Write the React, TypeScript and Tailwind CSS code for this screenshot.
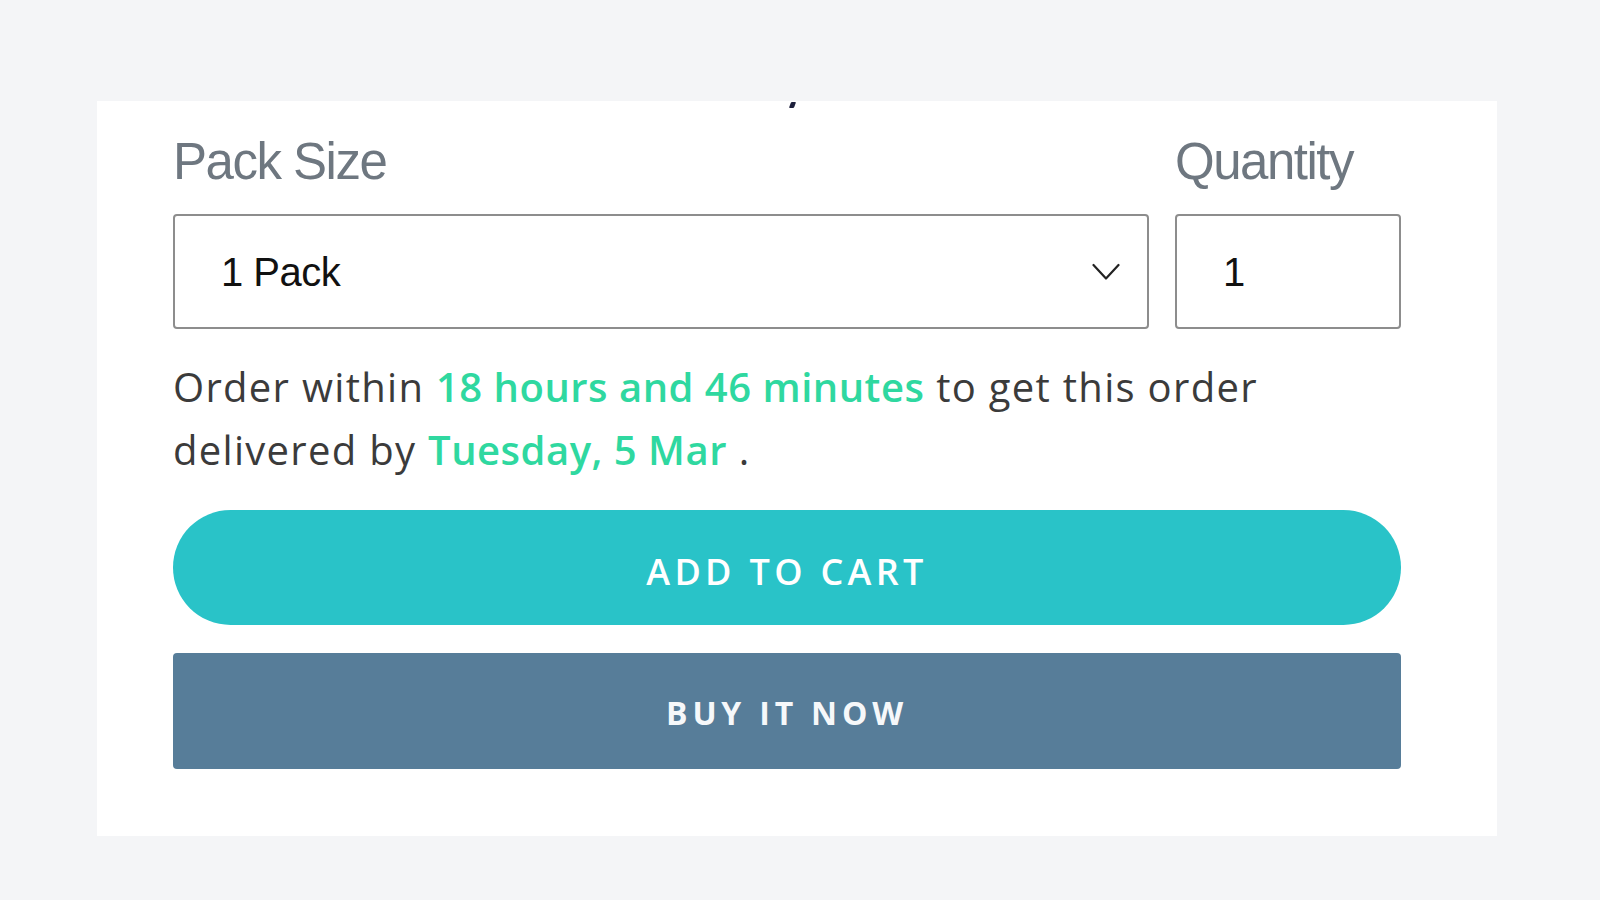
import React from "react";

export default function App() {
  return (
    <div className="w-[1600px] h-[900px] bg-[#f4f5f7] pt-[101px] pl-[97px] overflow-hidden">
      <div className="relative w-[1400px] h-[735px] bg-white pl-[76px] pr-[96px] pt-[35px]">
        <div className="absolute left-[693px] top-[1px] w-[5px] h-[6px] bg-[#1d1f3b] skew-x-[-20deg] rounded-[1px]" />
        <div className="flex gap-[26px]" style={{ fontFamily: '"Liberation Sans", Arial, sans-serif' }}>
          <div className="flex flex-col w-[976px]">
            <label className="text-[51px] leading-[51px] tracking-[-1.5px] text-[#6e7780]">Pack Size</label>
            <div className="mt-[27px] h-[115px] border-2 border-[#8d8d8d] rounded-[4px] flex items-center justify-between pl-[46px] pr-[27px]">
              <span className="text-[40px] tracking-[-0.5px] text-[#111]">1 Pack</span>
              <svg width="28" height="18" viewBox="0 0 28 18" fill="none">
                <polyline points="1.5,2 14,15.5 26.5,2" stroke="#222" strokeWidth="2.2" strokeLinecap="round" strokeLinejoin="round" />
              </svg>
            </div>
          </div>
          <div className="flex flex-col w-[226px]">
            <label className="text-[51px] leading-[51px] tracking-[-1.5px] text-[#6e7780]">Quantity</label>
            <div className="mt-[27px] h-[115px] border-2 border-[#8d8d8d] rounded-[4px] flex items-center pl-[46px]">
              <span className="text-[40px] text-[#111]">1</span>
            </div>
          </div>
        </div>
        <p
          className="mt-[26px] text-[40px] leading-[63px] tracking-[1.3px] text-[#3b3b3b]"
          style={{ fontFamily: '"Open Sans", "Noto Sans", sans-serif' }}
        >
          Order within <span className="font-semibold text-[#2fd8a0] tracking-[0.5px]">18 hours and 46 minutes</span> to get this order
          <br />
          delivered by <span className="font-semibold text-[#2fd8a0] tracking-[0.5px]">Tuesday, 5 Mar</span> .
        </p>
        <div style={{ fontFamily: '"Open Sans", "Noto Sans", sans-serif' }}>
          <button className="mt-[29px] w-full h-[115px] rounded-full bg-[#29c3c8] text-white text-[36px] font-semibold tracking-[0.12em] flex items-center justify-center pt-[8px]">
            ADD TO CART
          </button>
          <button className="mt-[28px] w-full h-[116px] rounded-[4px] bg-[#577d99] text-[#f6f8fa] text-[32px] font-bold tracking-[0.15em] flex items-center justify-center pt-[4px]">
            BUY IT NOW
          </button>
        </div>
      </div>
    </div>
  );
}
